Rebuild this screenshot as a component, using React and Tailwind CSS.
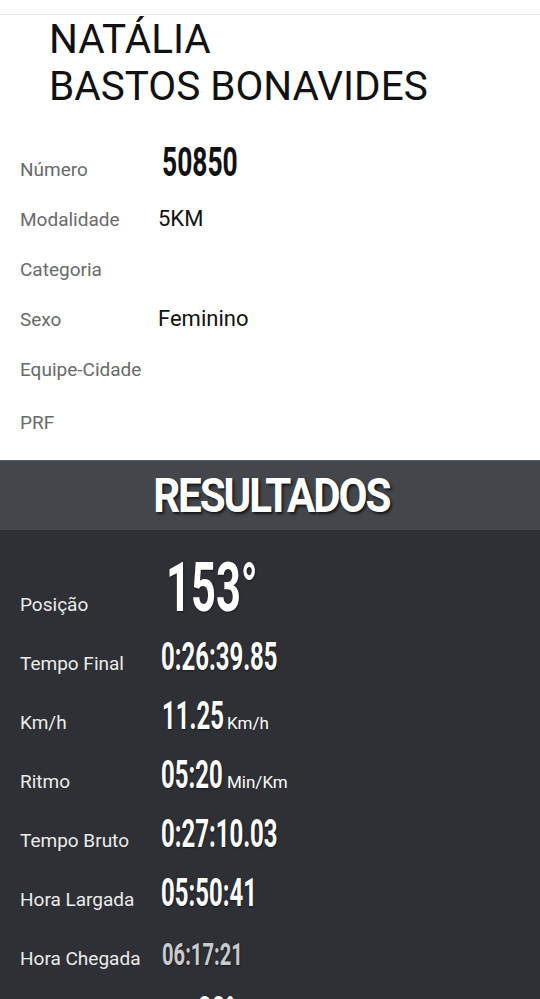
const roboto = { fontFamily: "Roboto, 'Noto Sans', sans-serif" };

const info = [
  { label: "Número", value: "50850", big: true },
  { label: "Modalidade", value: "5KM" },
  { label: "Categoria", value: "" },
  { label: "Sexo", value: "Feminino" },
  { label: "Equipe-Cidade", value: "" },
  { label: "PRF", value: "" },
];

// condensed look: Roboto bold squeezed horizontally
function Narrow({ children, w, className = "" }) {
  return (
    <span className={`inline-block whitespace-nowrap ${w}`}>
      <span className={`inline-block origin-left scale-x-[0.63] font-bold [text-shadow:1px_1px_2px_rgba(0,0,0,0.5)] ${className}`}>
        {children}
      </span>
    </span>
  );
}

function DarkRow({ label, children }) {
  return (
    <div className="flex items-baseline">
      <div className="w-[160px] shrink-0 pl-[20px] text-[19px] leading-[59px] text-[#ececec]">{label}</div>
      <div className="flex items-baseline">{children}</div>
    </div>
  );
}

export default function App() {
  return (
    <div className="h-[999px] overflow-hidden bg-[#2e3035]" style={roboto}>
      <div className="bg-white">
        <div className="h-[14px]" />
        <div className="border-t border-[#e3e3e3]" />
        <div className="pt-[1px] pl-[49px] text-[40.5px] leading-[47px] text-[#111]">
          <div>NATÁLIA</div>
          <div>BASTOS BONAVIDES</div>
        </div>

        <div className="pt-[35px] pb-[12px]">
          {info.map((row) => (
            <div key={row.label} className={`flex items-baseline ${row.label === "PRF" ? "pt-[3px]" : ""}`}>
              <div className="w-[158px] shrink-0 pl-[20px] text-[19px] leading-[50px] text-[#6a6a6a]">{row.label}</div>
              {row.big ? (
                <span className="ml-[4px] text-[40px] leading-[30px] text-[#111]">
                  <span className="inline-block origin-left scale-x-[0.66] font-bold">{row.value}</span>
                </span>
              ) : (
                <span className="text-[22px] leading-[30px] text-[#111]">{row.value}</span>
              )}
            </div>
          ))}
        </div>
      </div>

      <div className="flex h-[70px] items-center justify-center border-t border-[#5b5f64] bg-[#43474c]">
        <span className="ml-[2px] inline-block scale-x-[0.86] text-[49px] font-bold leading-none tracking-[-0.05em] text-white [text-shadow:2px_2px_3px_rgba(0,0,0,0.7)]">
          RESULTADOS
        </span>
      </div>

      <div className="pt-[33px] text-white">
        <DarkRow label="Posição">
          <span className="ml-[6px] text-[69px] leading-[50px]">
            <Narrow w="w-[100px]">153°</Narrow>
          </span>
        </DarkRow>
        <DarkRow label="Tempo Final">
          <span className="ml-[1px] text-[38px] leading-[30px]">
            <Narrow w="w-[120px]">0:26:39.85</Narrow>
          </span>
        </DarkRow>
        <DarkRow label="Km/h">
          <span className="ml-[2px] text-[38px] leading-[30px]">
            <Narrow w="w-[65px]">11.25</Narrow>
          </span>
          <span className="text-[17px] leading-[30px]">Km/h</span>
        </DarkRow>
        <DarkRow label="Ritmo">
          <span className="ml-[1px] text-[38px] leading-[30px]">
            <Narrow w="w-[66px]">05:20</Narrow>
          </span>
          <span className="text-[17px] leading-[30px]">Min/Km</span>
        </DarkRow>
        <DarkRow label="Tempo Bruto">
          <span className="ml-[1px] text-[38px] leading-[30px]">
            <Narrow w="w-[120px]">0:27:10.03</Narrow>
          </span>
        </DarkRow>
        <DarkRow label="Hora Largada">
          <span className="ml-[1px] text-[38px] leading-[30px]">
            <Narrow w="w-[100px]">05:50:41</Narrow>
          </span>
        </DarkRow>
        <DarkRow label="Hora Chegada">
          <span className="ml-[2px] text-[32px] leading-[30px] text-[#c9cacd]">
            <Narrow w="w-[80px]">06:17:21</Narrow>
          </span>
        </DarkRow>
        <DarkRow label={"\u00a0"}>
          <span className="ml-[38px] text-[38px] leading-[30px]">
            <Narrow w="w-[60px]">33°</Narrow>
          </span>
        </DarkRow>
      </div>
    </div>
  );
}
